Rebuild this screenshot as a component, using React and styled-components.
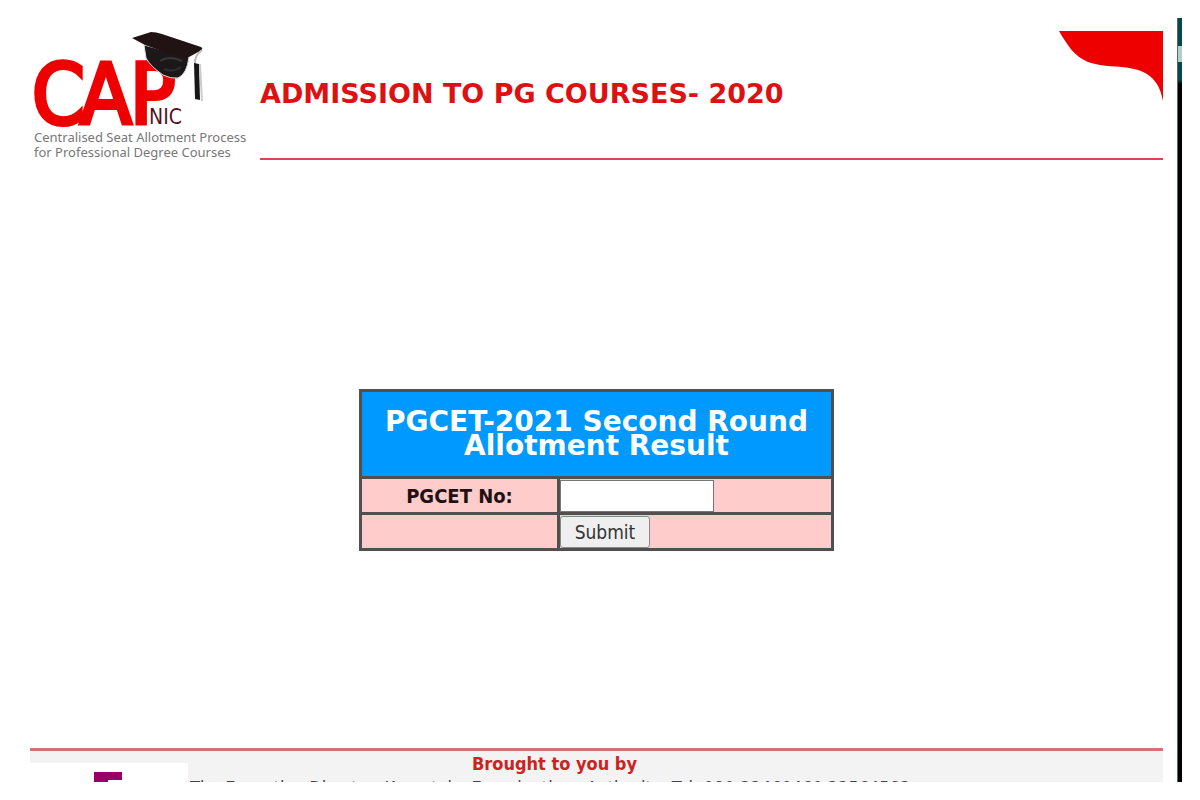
import React, { useState } from "react";
import styled, { createGlobalStyle } from "styled-components";

function Logo() {
  return (
    <Brand.Wrapper>
      <Brand.Drawing viewBox="0 0 200 100" role="img" aria-label="CAP NIC">
        <Brand.Letter x="-2" y="94">C</Brand.Letter>
        <Brand.Letter x="46" y="94">A</Brand.Letter>
        <Brand.Letter x="96" y="94">P</Brand.Letter>
        <Brand.Small x="115" y="94">NIC</Brand.Small>
        <path d="M110 15 L112 28 Q116 36 129 45 Q137 49 144 48 Q153 44 155 27 Z" fill="#1c1819" stroke="#dddddd" strokeWidth="1" />
        <path d="M98 8 L117 2 Q122 2 128 4 L167 17 Q170 19 166 21 L155 27 Q150 29 145 27 L111 15 Z" fill="#211314" />
        <path d="M126 31 Q135 25 148 31" fill="none" stroke="#3a3638" strokeWidth="2" />
        <path d="M130 39 Q139 43 147 37" fill="none" stroke="#302d2e" strokeWidth="2" />
        <path d="M168 20 Q160 26 161 34" fill="none" stroke="#bbbbbb" strokeWidth="2" />
        <path d="M160 33 L165 34 L166 70 L161 69 Z" fill="#171718" />
        <path d="M166 34 L168 71" fill="none" stroke="#cccccc" strokeWidth="2" />
      </Brand.Drawing>
      <Brand.Tagline>
        Centralised Seat Allotment Process
        <br />
        for Professional Degree Courses
      </Brand.Tagline>
    </Brand.Wrapper>
  );
}

function ResultForm() {
  const [number, setNumber] = useState("");

  return (
    <form onSubmit={(e) => e.preventDefault()}>
      <Result.Table>
        <thead>
          <tr>
            <Result.Title colSpan={2}>
              PGCET-2021 Second Round
              <br />
              Allotment Result
            </Result.Title>
          </tr>
        </thead>
        <tbody>
          <tr>
            <Result.Label scope="row">
              <label htmlFor="pgcet-no">PGCET No:</label>
            </Result.Label>
            <Result.Cell>
              <Result.Input
                id="pgcet-no"
                type="text"
                value={number}
                onChange={(e) => setNumber(e.target.value)}
              />
            </Result.Cell>
          </tr>
          <tr>
            <Result.Cell />
            <Result.Cell>
              <Result.Button type="submit">Submit</Result.Button>
            </Result.Cell>
          </tr>
        </tbody>
      </Result.Table>
    </form>
  );
}

function App() {
  return (
    <Layout.Wrapper>
      <GlobalStyle />
      <Layout.Page>
        <Header.Wrapper>
          <Logo />
          <Header.Banner>
            <Header.Title>ADMISSION TO PG COURSES- 2020</Header.Title>
            <Header.Corner viewBox="0 0 104 70" aria-hidden="true">
              <path d="M0 0 H104 V70 C101 53 93 42 75 38 C58 34 46 37 29 31 C15 25 9 15 0 0 Z" fill="#ee0000" />
            </Header.Corner>
          </Header.Banner>
        </Header.Wrapper>
        <Layout.Main>
          <ResultForm />
        </Layout.Main>
        <Footer.Wrapper>
          <Footer.Logo>
            <svg width="28" height="40" viewBox="0 0 28 40" aria-hidden="true">
              <path d="M0 0 H28 V8 H14 V40 H0 Z" fill="#990066" />
            </svg>
          </Footer.Logo>
          <Footer.Text>
            <Footer.Heading>Brought to you by</Footer.Heading>
            <Footer.Address>
              The Executive Director, Karnataka Examinations Authority, Tel: 080-23460460,23564583
            </Footer.Address>
          </Footer.Text>
        </Footer.Wrapper>
      </Layout.Page>
      <Layout.Edge />
    </Layout.Wrapper>
  );
}

const Layout = {
  Wrapper: styled.div`
    display: flex;
    height: 100vh;
    padding: 18px 18px 18px 30px;
    background-color: #ffffff;
  `,
  Page: styled.div`
    flex: 1;
    min-width: 0;
    display: flex;
    flex-direction: column;
  `,
  Main: styled.main`
    flex: 1;
    display: flex;
    justify-content: center;
    align-items: center;
    padding-top: 32px;
  `,
  Edge: styled.div`
    width: 5px;
    margin-left: 14px;
    border-left: 1px solid #5a6b66;
    background: linear-gradient(
      #04484a 28px,
      #b5cccc 28px,
      #b5cccc 44px,
      #04484a 44px,
      #04484a 62px,
      #000000 66px
    );
  `,
};

const Header = {
  Wrapper: styled.header`
    display: flex;
    height: 142px;
  `,
  Banner: styled.div`
    flex: 1;
    display: flex;
    justify-content: space-between;
    border-bottom: 2px solid #dd4450;
  `,
  Title: styled.h1`
    padding-top: 60px;
    font-size: 27px;
    line-height: 32px;
    white-space: nowrap;
    color: #dd1111;
  `,
  Corner: styled.svg`
    width: 104px;
    height: 70px;
    margin-top: 13px;
  `,
};

const Brand = {
  Wrapper: styled.div`
    width: 230px;
    padding: 12px 0 0 4px;
  `,
  Drawing: styled.svg`
    display: block;
    width: 200px;
    height: 100px;
    overflow: visible;
  `,
  Letter: styled.text`
    font-family: "DejaVu Sans Condensed", "Open Sans", sans-serif;
    font-size: 84px;
    fill: #ee0000;
    stroke: #ee0000;
    stroke-width: 4px;
  `,
  Small: styled.text`
    font-family: "DejaVu Sans Condensed", "Open Sans", sans-serif;
    font-size: 21px;
    fill: #551122;
  `,
  Tagline: styled.p`
    font-family: "Noto Sans", sans-serif;
    font-size: 13px;
    line-height: 15px;
    white-space: nowrap;
    color: #777777;
  `,
};

const Result = {
  Table: styled.table`
    width: 475px;
    border-collapse: collapse;
    border: 3px solid #505050;
    background-color: #ffcccc;
  `,
  Title: styled.th`
    height: 87px;
    border: 3px solid #505050;
    background-color: #0099ff;
    font-size: 28px;
    line-height: 24px;
    color: #ffffff;
  `,
  Label: styled.th`
    width: 198px;
    border: 3px solid #505050;
    font-family: "DejaVu Sans Condensed", "Open Sans", sans-serif;
    font-size: 20px;
    color: #221111;
  `,
  Cell: styled.td`
    height: 36px;
    border: 3px solid #505050;
  `,
  Input: styled.input`
    display: block;
    width: 154px;
    height: 32px;
    padding: 0 4px;
    border: 1px solid #777777;
    background-color: #ffffff;
    font-size: 18px;
  `,
  Button: styled.button`
    display: block;
    width: 90px;
    height: 32px;
    border: 1px solid #888888;
    border-radius: 3px;
    background-color: #efefef;
    font-family: "DejaVu Sans Condensed", "Open Sans", sans-serif;
    font-size: 19px;
    color: #333333;
  `,
};

const Footer = {
  Wrapper: styled.footer`
    display: flex;
    height: 34px;
    overflow: hidden;
    border-top: 3px solid #cf7373;
    background-color: #f3f3f3;
  `,
  Logo: styled.div`
    width: 158px;
    height: 40px;
    margin: 12px 2px 0 0;
    padding: 9px 0 0 64px;
    background-color: #ffffff;
  `,
  Text: styled.div`
    flex: 1;
    min-width: 0;
    font-family: "DejaVu Sans Condensed", "Open Sans", sans-serif;
  `,
  Heading: styled.h2`
    padding-left: 282px;
    font-size: 18px;
    line-height: 26px;
    color: #cc2222;
  `,
  Address: styled.p`
    font-size: 18px;
    line-height: 22px;
    white-space: nowrap;
    color: #444444;
  `,
};

const GlobalStyle = createGlobalStyle`
  *,
  *::before,
  *::after {
    margin: 0;
    padding: 0;
    box-sizing: border-box;
  }

  body {
    font-family: "DejaVu Sans", Verdana, sans-serif;
  }
`;

export default App;
